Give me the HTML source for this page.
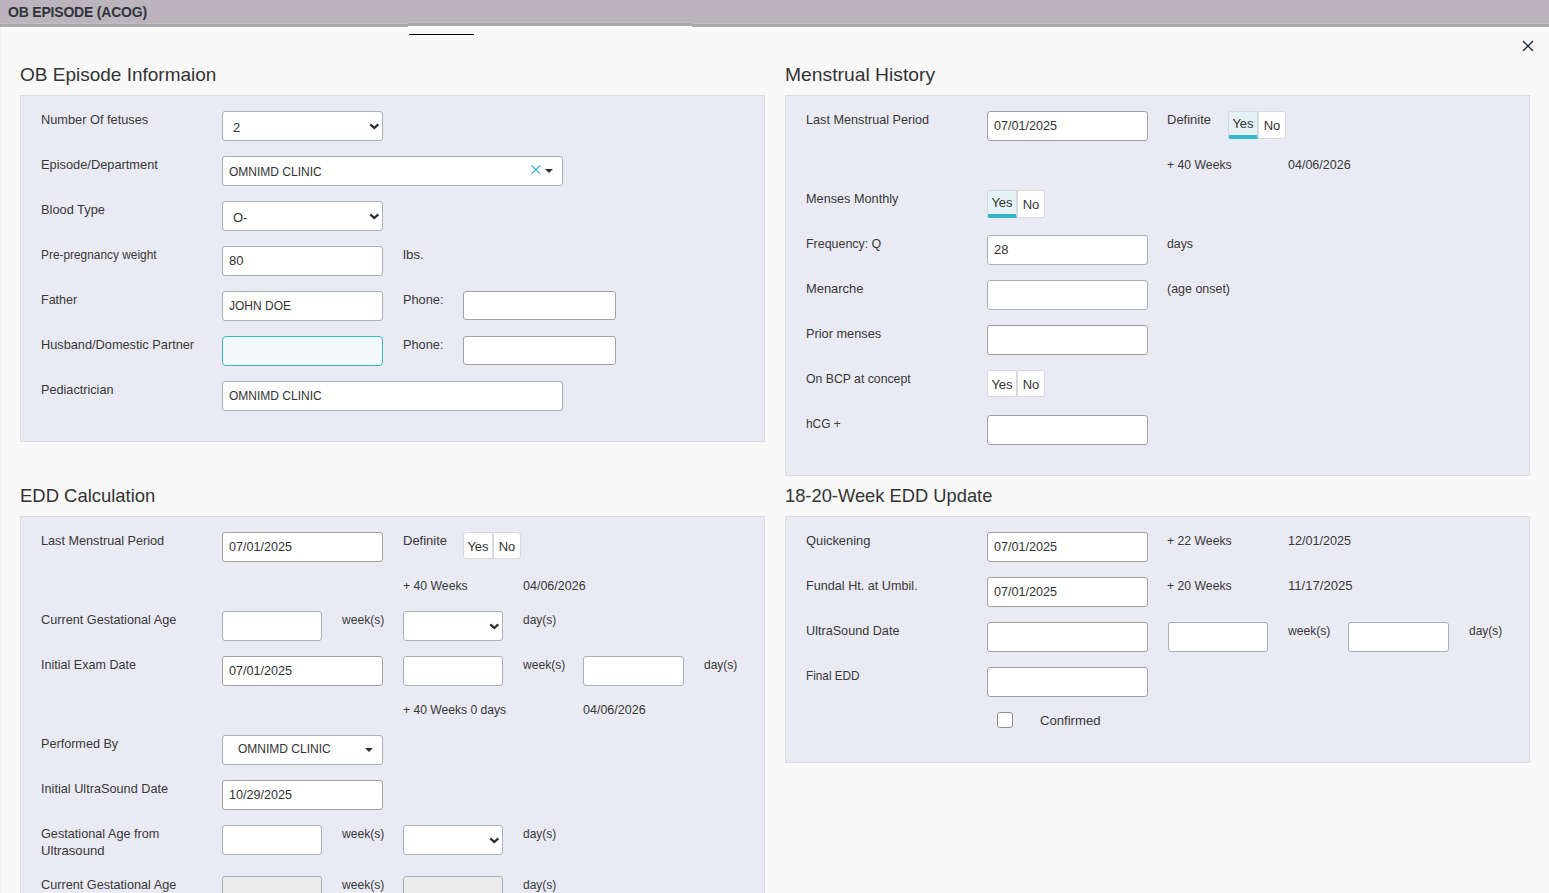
<!DOCTYPE html>
<html><head><meta charset="utf-8">
<style>
html,body{margin:0;padding:0}
body{width:1549px;height:893px;overflow:hidden;position:relative;background:#f9f9f9;font-family:"Liberation Sans",sans-serif;color:#333}
.hdr{position:absolute;left:0;top:0;width:1549px;height:24px;background:#bbb4bc;border-bottom:3px solid #a8a9aa}
.hdr .t{position:absolute;left:8px;top:4px;font-size:14px;line-height:17px;font-weight:bold;color:#30353a;letter-spacing:-0.2px}
.h2{position:absolute;font-size:19px;color:#333;white-space:nowrap}
.panel{position:absolute;background:#eaeaf4;border:1px solid #dbdbe4;box-sizing:border-box}
.lbl{position:absolute;font-size:13px;color:#383838;white-space:nowrap;line-height:17px}
.inp{position:absolute;box-sizing:border-box;background:#fff;border:1px solid #a8b0b8;border-radius:3px;font-size:13px;color:#333}
.inp span{position:absolute;left:6px;top:6px;line-height:16px;white-space:nowrap}
.sel span{left:10px;top:8px}
.uc{font-size:12px}
.chev{position:absolute;right:2px;top:11px}
.dis{background:#ebebeb}
.gr{border-color:#a2a2a2}
.foc{border-color:#3ab5c9;background:#f2fafc;border-radius:4px}
.tg{position:absolute;height:27px;display:flex}
.tg div{box-sizing:border-box;height:27px;background:#fff;border:1px solid #d9d9dc;font-size:13px;color:#333;line-height:27px;text-align:center}
.ty{width:30px;border-radius:3px 0 0 3px}
.tn{width:28px;border-radius:0 3px 3px 0}
.ty.act{height:28px !important;background:#e5f2f6;border-bottom:4px solid #35b5ca !important;line-height:23px}
.tg .ty.act + .tn{height:28px}
.close{position:absolute;left:1522px;top:40px}
</style></head><body>
<div class="hdr"><div class="t">OB EPISODE (ACOG)</div></div>
<div style="position:absolute;left:0;top:23px;width:1549px;height:1px;background:#c3bdc5"></div>
<div style="position:absolute;left:0;top:27px;width:1549px;height:1px;background:#fdfdfd"></div>
<div style="position:absolute;left:408px;top:22px;width:284px;height:1px;background:#c3bdc5"></div>
<div style="position:absolute;left:408px;top:23px;width:284px;height:3px;background:#a8a9aa"></div>
<div style="position:absolute;left:408px;top:26px;width:284px;height:1px;background:#fdfdfd"></div>
<div style="position:absolute;left:408px;top:27px;width:284px;height:1px;background:#f9f9f9"></div>
<div style="position:absolute;left:409px;top:34px;width:65px;height:1px;background:#000"></div>
<div style="position:absolute;left:0;top:27px;width:1px;height:866px;background:#f1f1f1"></div>

<svg class="close" width="12" height="12" viewBox="0 0 12 12"><path d="M1 1 L11 11 M11 1 L1 11" stroke="#1f2a36" stroke-width="1.35"/></svg>
<div class="h2" style="left:20px;top:64px">OB Episode Informaion</div>
<div class="h2" style="left:785px;top:64px;transform:scaleX(1.015);transform-origin:0 0">Menstrual History</div>
<div class="h2" style="left:20px;top:485px;transform:scaleX(0.971);transform-origin:0 0">EDD Calculation</div>
<div class="h2" style="left:785px;top:485px;transform:scaleX(0.964);transform-origin:0 0">18-20-Week EDD Update</div>
<div class="panel" style="left:20px;top:95px;width:745px;height:347px"></div>
<div class="panel" style="left:785px;top:95px;width:745px;height:381px"></div>
<div class="panel" style="left:20px;top:516px;width:745px;height:400px"></div>
<div class="panel" style="left:785px;top:516px;width:745px;height:247px"></div>
<div class="lbl" style="left:41px;top:111px;transform:scaleX(0.983);transform-origin:0 0">Number Of fetuses</div>
<div class="inp sel" style="left:222px;top:111px;width:161px;height:30px"><span>2</span><svg class="chev" width="11" height="7" viewBox="0 0 11 7"><path d="M1.3 1.3 L5.3 5 L9.3 1.3" fill="none" stroke="#2b2f33" stroke-width="2.3"/></svg></div>
<div class="lbl" style="left:41px;top:156px;transform:scaleX(0.986);transform-origin:0 0">Episode/Department</div>
<div class="inp" style="left:222px;top:156px;width:341px;height:30px"><span class="uc" style="top:7px">OMNIMD CLINIC</span><svg style="position:absolute;left:308px;top:8px" width="10" height="10" viewBox="0 0 10 10"><path d="M0.6 0.4 L9.1 8.9 M9.1 0.4 L0.6 8.9" stroke="#33b8d0" stroke-width="1.3"/></svg><svg style="position:absolute;left:322px;top:12px" width="8" height="4" viewBox="0 0 8 4"><path d="M0 0 L8 0 L4 4 Z" fill="#2b2f36"/></svg></div>
<div class="lbl" style="left:41px;top:201px;transform:scaleX(0.986);transform-origin:0 0">Blood Type</div>
<div class="inp sel" style="left:222px;top:201px;width:161px;height:30px"><span>O-</span><svg class="chev" width="11" height="7" viewBox="0 0 11 7"><path d="M1.3 1.3 L5.3 5 L9.3 1.3" fill="none" stroke="#2b2f33" stroke-width="2.3"/></svg></div>
<div class="lbl" style="left:41px;top:246px;transform:scaleX(0.914);transform-origin:0 0">Pre-pregnancy weight</div>
<div class="inp" style="left:222px;top:246px;width:161px;height:30px"><span>80</span></div>
<div class="lbl" style="left:403px;top:246px;transform:scaleX(1.028);transform-origin:0 0">lbs.</div>
<div class="lbl" style="left:41px;top:291px;transform:scaleX(0.962);transform-origin:0 0">Father</div>
<div class="inp" style="left:222px;top:291px;width:161px;height:30px"><span class="uc">JOHN DOE</span></div>
<div class="lbl" style="left:403px;top:291px;transform:scaleX(0.982);transform-origin:0 0">Phone:</div>
<div class="inp gr" style="left:463px;top:291px;width:153px;height:29px"><span></span></div>
<div class="lbl" style="left:41px;top:336px;transform:scaleX(0.981);transform-origin:0 0">Husband/Domestic Partner</div>
<div class="inp foc" style="left:222px;top:336px;width:161px;height:30px"><span></span></div>
<div class="lbl" style="left:403px;top:336px;transform:scaleX(0.982);transform-origin:0 0">Phone:</div>
<div class="inp gr" style="left:463px;top:336px;width:153px;height:29px"><span></span></div>
<div class="lbl" style="left:41px;top:381px;transform:scaleX(0.974);transform-origin:0 0">Pediactrician</div>
<div class="inp" style="left:222px;top:381px;width:341px;height:30px"><span class="uc">OMNIMD CLINIC</span></div>
<div class="lbl" style="left:806px;top:111px;transform:scaleX(0.974);transform-origin:0 0">Last Menstrual Period</div>
<div class="inp gr" style="left:987px;top:111px;width:161px;height:30px"><span style="transform:scaleX(0.97);transform-origin:0 0">07/01/2025</span></div>
<div class="lbl" style="left:1167px;top:111px">Definite</div>
<div class="tg" style="left:1228px;top:111px"><div class="ty act">Yes</div><div class="tn">No</div></div>
<div class="lbl" style="left:1167px;top:156px;transform:scaleX(0.94);transform-origin:0 0">+ 40 Weeks</div>
<div class="lbl" style="left:1288px;top:156px;transform:scaleX(0.963);transform-origin:0 0">04/06/2026</div>
<div class="lbl" style="left:806px;top:190px;transform:scaleX(0.976);transform-origin:0 0">Menses Monthly</div>
<div class="tg" style="left:987px;top:190px"><div class="ty act">Yes</div><div class="tn">No</div></div>
<div class="lbl" style="left:806px;top:235px;transform:scaleX(0.956);transform-origin:0 0">Frequency: Q</div>
<div class="inp" style="left:987px;top:235px;width:161px;height:30px"><span>28</span></div>
<div class="lbl" style="left:1167px;top:235px;transform:scaleX(0.944);transform-origin:0 0">days</div>
<div class="lbl" style="left:806px;top:280px;transform:scaleX(0.993);transform-origin:0 0">Menarche</div>
<div class="inp" style="left:987px;top:280px;width:161px;height:30px"><span></span></div>
<div class="lbl" style="left:1167px;top:280px;transform:scaleX(0.958);transform-origin:0 0">(age onset)</div>
<div class="lbl" style="left:806px;top:325px;transform:scaleX(0.981);transform-origin:0 0">Prior menses</div>
<div class="inp gr" style="left:987px;top:325px;width:161px;height:30px"><span></span></div>
<div class="lbl" style="left:806px;top:370px;transform:scaleX(0.942);transform-origin:0 0">On BCP at concept</div>
<div class="tg" style="left:987px;top:370px"><div class="ty">Yes</div><div class="tn">No</div></div>
<div class="lbl" style="left:806px;top:415px;transform:scaleX(0.914);transform-origin:0 0">hCG +</div>
<div class="inp gr" style="left:987px;top:415px;width:161px;height:30px"><span></span></div>
<div class="lbl" style="left:41px;top:532px;transform:scaleX(0.974);transform-origin:0 0">Last Menstrual Period</div>
<div class="inp gr" style="left:222px;top:532px;width:161px;height:30px"><span style="transform:scaleX(0.97);transform-origin:0 0">07/01/2025</span></div>
<div class="lbl" style="left:403px;top:532px">Definite</div>
<div class="tg" style="left:463px;top:532px"><div class="ty">Yes</div><div class="tn">No</div></div>
<div class="lbl" style="left:403px;top:577px;transform:scaleX(0.94);transform-origin:0 0">+ 40 Weeks</div>
<div class="lbl" style="left:523px;top:577px;transform:scaleX(0.963);transform-origin:0 0">04/06/2026</div>
<div class="lbl" style="left:41px;top:611px;transform:scaleX(0.975);transform-origin:0 0">Current Gestational Age</div>
<div class="inp" style="left:222px;top:611px;width:100px;height:30px"><span></span></div>
<div class="lbl" style="left:342px;top:611px;transform:scaleX(0.931);transform-origin:0 0">week(s)</div>
<div class="inp sel" style="left:403px;top:611px;width:100px;height:30px"><span></span><svg class="chev" width="11" height="7" viewBox="0 0 11 7"><path d="M1.3 1.3 L5.3 5 L9.3 1.3" fill="none" stroke="#2b2f33" stroke-width="2.3"/></svg></div>
<div class="lbl" style="left:523px;top:611px;transform:scaleX(0.92);transform-origin:0 0">day(s)</div>
<div class="lbl" style="left:41px;top:656px;transform:scaleX(0.967);transform-origin:0 0">Initial Exam Date</div>
<div class="inp gr" style="left:222px;top:656px;width:161px;height:30px"><span style="transform:scaleX(0.97);transform-origin:0 0">07/01/2025</span></div>
<div class="inp" style="left:403px;top:656px;width:100px;height:30px"><span></span></div>
<div class="lbl" style="left:523px;top:656px;transform:scaleX(0.931);transform-origin:0 0">week(s)</div>
<div class="inp" style="left:583px;top:656px;width:101px;height:30px"><span></span></div>
<div class="lbl" style="left:704px;top:656px;transform:scaleX(0.92);transform-origin:0 0">day(s)</div>
<div class="lbl" style="left:403px;top:701px;transform:scaleX(0.932);transform-origin:0 0">+ 40 Weeks 0 days</div>
<div class="lbl" style="left:583px;top:701px;transform:scaleX(0.963);transform-origin:0 0">04/06/2026</div>
<div class="lbl" style="left:41px;top:735px;transform:scaleX(0.971);transform-origin:0 0">Performed By</div>
<div class="inp" style="left:222px;top:735px;width:161px;height:30px"><span class="uc" style="left:15px;top:5px">OMNIMD CLINIC</span><svg style="position:absolute;left:142px;top:12px" width="8" height="4" viewBox="0 0 8 4"><path d="M0 0 L8 0 L4 4 Z" fill="#2b2f36"/></svg></div>
<div class="lbl" style="left:41px;top:780px;transform:scaleX(0.977);transform-origin:0 0">Initial UltraSound Date</div>
<div class="inp gr" style="left:222px;top:780px;width:161px;height:30px"><span style="transform:scaleX(0.97);transform-origin:0 0">10/29/2025</span></div>
<div class="lbl" style="left:41px;top:825px;transform:scaleX(0.975);transform-origin:0 0">Gestational Age from</div>
<div class="lbl" style="left:41px;top:842px;transform:scaleX(1.011);transform-origin:0 0">Ultrasound</div>
<div class="inp" style="left:222px;top:825px;width:100px;height:30px"><span></span></div>
<div class="lbl" style="left:342px;top:825px;transform:scaleX(0.931);transform-origin:0 0">week(s)</div>
<div class="inp sel" style="left:403px;top:825px;width:100px;height:30px"><span></span><svg class="chev" width="11" height="7" viewBox="0 0 11 7"><path d="M1.3 1.3 L5.3 5 L9.3 1.3" fill="none" stroke="#2b2f33" stroke-width="2.3"/></svg></div>
<div class="lbl" style="left:523px;top:825px;transform:scaleX(0.92);transform-origin:0 0">day(s)</div>
<div class="lbl" style="left:41px;top:876px;transform:scaleX(0.975);transform-origin:0 0">Current Gestational Age</div>
<div class="inp dis" style="left:222px;top:876px;width:100px;height:30px"><span></span></div>
<div class="lbl" style="left:342px;top:876px;transform:scaleX(0.931);transform-origin:0 0">week(s)</div>
<div class="inp dis" style="left:403px;top:876px;width:100px;height:30px"><span></span></div>
<div class="lbl" style="left:523px;top:876px;transform:scaleX(0.92);transform-origin:0 0">day(s)</div>
<div class="lbl" style="left:806px;top:532px;transform:scaleX(0.989);transform-origin:0 0">Quickening</div>
<div class="inp gr" style="left:987px;top:532px;width:161px;height:30px"><span style="transform:scaleX(0.97);transform-origin:0 0">07/01/2025</span></div>
<div class="lbl" style="left:1167px;top:532px;transform:scaleX(0.94);transform-origin:0 0">+ 22 Weeks</div>
<div class="lbl" style="left:1288px;top:532px;transform:scaleX(0.969);transform-origin:0 0">12/01/2025</div>
<div class="lbl" style="left:806px;top:577px;transform:scaleX(0.972);transform-origin:0 0">Fundal Ht. at Umbil.</div>
<div class="inp gr" style="left:987px;top:577px;width:161px;height:30px"><span style="transform:scaleX(0.97);transform-origin:0 0">07/01/2025</span></div>
<div class="lbl" style="left:1167px;top:577px;transform:scaleX(0.94);transform-origin:0 0">+ 20 Weeks</div>
<div class="lbl" style="left:1288px;top:577px;transform:scaleX(1.008);transform-origin:0 0">11/17/2025</div>
<div class="lbl" style="left:806px;top:622px;transform:scaleX(0.972);transform-origin:0 0">UltraSound Date</div>
<div class="inp gr" style="left:987px;top:622px;width:161px;height:30px"><span></span></div>
<div class="inp" style="left:1168px;top:622px;width:100px;height:30px"><span></span></div>
<div class="lbl" style="left:1288px;top:622px;transform:scaleX(0.931);transform-origin:0 0">week(s)</div>
<div class="inp" style="left:1348px;top:622px;width:101px;height:30px"><span></span></div>
<div class="lbl" style="left:1469px;top:622px;transform:scaleX(0.92);transform-origin:0 0">day(s)</div>
<div class="lbl" style="left:806px;top:667px;transform:scaleX(0.905);transform-origin:0 0">Final EDD</div>
<div class="inp gr" style="left:987px;top:667px;width:161px;height:30px"><span></span></div>
<div style="position:absolute;left:997px;top:712px;width:16px;height:16px;box-sizing:border-box;border:1px solid #8f8f8f;border-radius:3px;background:#fff"></div>
<div class="lbl" style="left:1040px;top:712px;transform:scaleX(1.009);transform-origin:0 0">Confirmed</div>
</body></html>
